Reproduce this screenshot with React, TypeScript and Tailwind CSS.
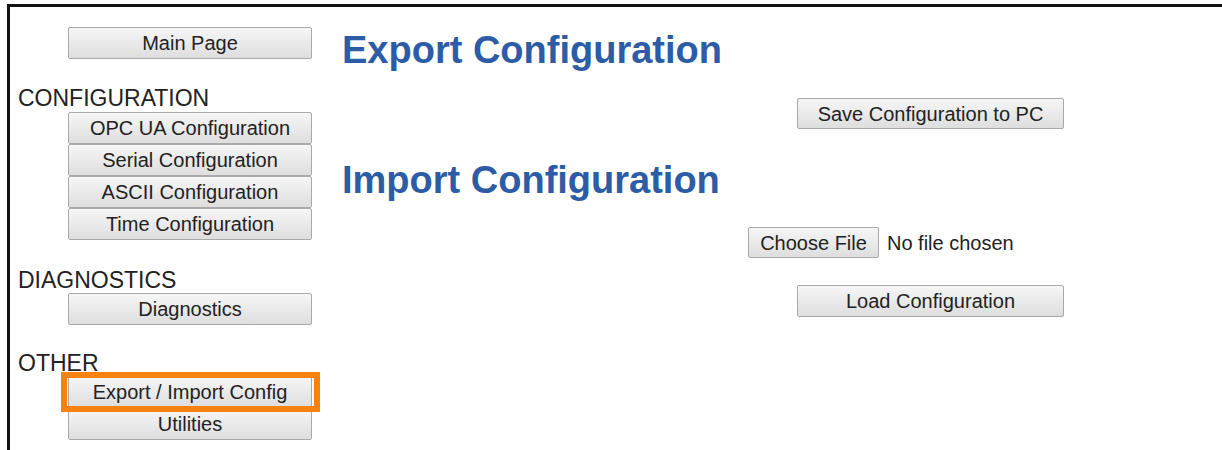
import React from 'react';

const font = { fontFamily: '"Liberation Sans", Arial, sans-serif' };

function NavButton({ label, className = '' }: { label: string; className?: string }) {
    return (
        <button
            type="button"
            className={`block w-[244px] h-[32px] ml-[58px] border border-[#a9a9a9] rounded-[2px] bg-gradient-to-b from-[#f6f6f6] to-[#dedede] text-[20px] leading-none text-[#222] ${className}`}
        >
            {label}
        </button>
    );
}

function SectionLabel({ children, className = '' }: { children: React.ReactNode; className?: string }) {
    return <div className={`text-[23px] leading-[26px] text-[#222] ${className}`}>{children}</div>;
}

export default function App() {
    return (
        <div className="min-h-[450px] bg-white pt-[4px] pl-[7px]" style={font}>
            <div className="flex border-t-[3px] border-l-[3px] border-[#111] min-h-[446px]">
                {/* Side navigation */}
                <nav className="w-[302px] pt-[20px] pl-0 flex flex-col">
                    <NavButton label="Main Page" />

                    <SectionLabel className="mt-[26px] ml-[8px]">CONFIGURATION</SectionLabel>
                    <NavButton label="OPC UA Configuration" className="mt-[1px]" />
                    <NavButton label="Serial Configuration" />
                    <NavButton label="ASCII Configuration" />
                    <NavButton label="Time Configuration" />

                    <SectionLabel className="mt-[27px] ml-[8px]">DIAGNOSTICS</SectionLabel>
                    <NavButton label="Diagnostics" />

                    <SectionLabel className="mt-[25px] ml-[8px]">OTHER</SectionLabel>
                    <div className="relative">
                        <NavButton label="Export / Import Config" />
                        {/* highlight around the current page */}
                        <span className="absolute left-[51px] top-[-4px] w-[259px] h-[40px] border-[6px] border-[#f7820f] pointer-events-none" />
                    </div>
                    <NavButton label="Utilities" />
                </nav>

                {/* Export / import panel */}
                <main className="ml-[30px] pt-[21px] flex flex-col">
                    <h1 className="text-[38px] leading-[44px] font-bold text-[#2d5ca6]">Export Configuration</h1>
                    <button
                        type="button"
                        className="mt-[26px] ml-[455px] w-[267px] h-[31px] border border-[#a9a9a9] rounded-[2px] bg-gradient-to-b from-[#f6f6f6] to-[#dedede] text-[20px] leading-none text-[#222]"
                    >
                        Save Configuration to PC
                    </button>

                    <h1 className="mt-[29px] text-[38px] leading-[44px] font-bold text-[#2d5ca6]">Import Configuration</h1>
                    <div className="mt-[25px] ml-[406px] flex items-center gap-[8px]">
                        <label className="w-[131px] h-[31px] flex items-center justify-center border border-[#a9a9a9] rounded-[2px] bg-gradient-to-b from-[#f6f6f6] to-[#dedede] text-[20px] leading-none text-[#222]">
                            Choose File
                            <input type="file" className="hidden" />
                        </label>
                        <span className="text-[20px] leading-none text-[#222]">No file chosen</span>
                    </div>
                    <button
                        type="button"
                        className="mt-[27px] ml-[455px] w-[267px] h-[32px] border border-[#a9a9a9] rounded-[2px] bg-gradient-to-b from-[#f6f6f6] to-[#dedede] text-[20px] leading-none text-[#222]"
                    >
                        Load Configuration
                    </button>
                </main>
            </div>
        </div>
    );
}
